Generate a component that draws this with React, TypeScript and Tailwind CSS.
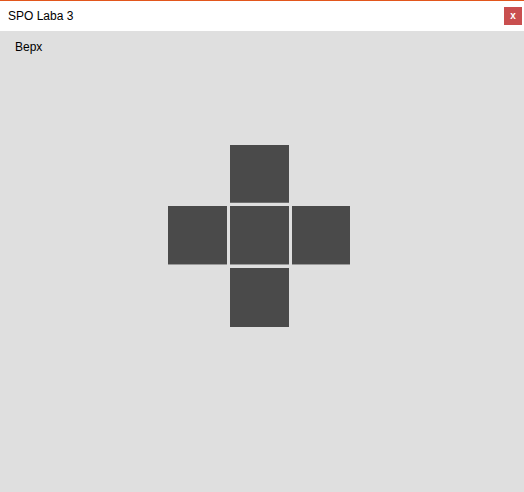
export default function App() {
  return (
    <div className="w-[524px] h-[492px] flex flex-col bg-[#dfdfdf] font-['Liberation_Sans',Arial,sans-serif] overflow-hidden">
      {/* Title bar */}
      <div className="h-[31px] shrink-0 bg-white border-t border-[#e2561c] flex items-center justify-between pl-[8px] pr-[2px]">
        <span className="text-[12px] text-black leading-none">SPO Laba 3</span>
        <button className="w-[18px] h-[18px] bg-[#c94f4f] text-white text-[10px] font-bold leading-none flex items-center justify-center">
          x
        </button>
      </div>

      <div className="flex-1 flex flex-col">
        <div className="pl-[15px] pt-[10px] text-[12px] text-black leading-none">Верх</div>

        {/* Cross of squares */}
        <div className="mt-[92px] ml-[168px] grid grid-cols-[59px_59px_58px] grid-rows-[58px_59px_59px] gap-[3px]">
          <div />
          <div className="bg-[#4a4a4a] border-b border-[#6e6e6e]" />
          <div />
          <div className="bg-[#4a4a4a] border-b border-[#9a9a9a]" />
          <div className="bg-[#4a4a4a] border-b border-[#9a9a9a]" />
          <div className="bg-[#4a4a4a] border-b border-[#9a9a9a]" />
          <div />
          <div className="bg-[#4a4a4a]" />
          <div />
        </div>
      </div>
    </div>
  );
}
